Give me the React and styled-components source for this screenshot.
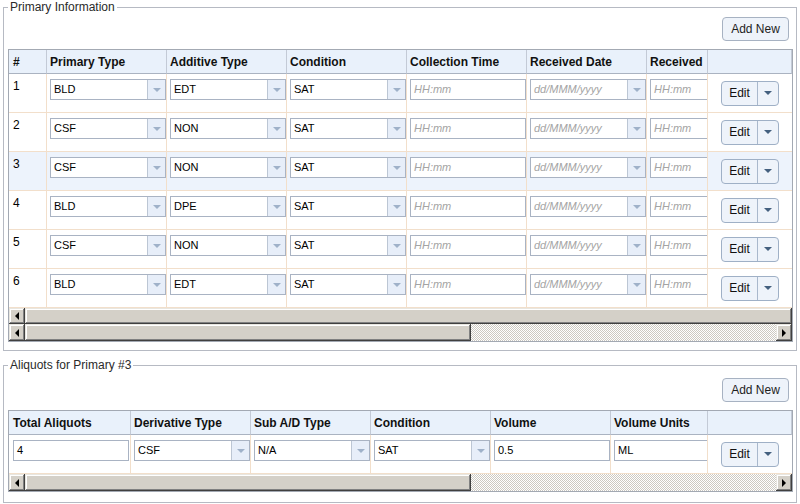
import React from 'react';
import styled, { createGlobalStyle } from 'styled-components';

const GlobalStyle = createGlobalStyle`
  html, body {
    margin: 0;
    padding: 0;
    background: #fff;
  }
  body {
    font-family: "Liberation Sans", Arial, sans-serif;
    font-size: 12px;
    color: #000;
  }
`;

const Page = styled.div`
  width: 800px;
  height: 504px;
  overflow: hidden;
  box-sizing: border-box;
  padding: 0 3px;
  display: flex;
  flex-direction: column;
  gap: 7px;
`;

const Fieldset = styled.fieldset`
  margin: 0;
  min-width: 0;
  border: 1px solid #b6bac3;
  padding: ${(p) => p.$pt}px 3px ${(p) => p.$pb}px 4px;
`;

const Legend = styled.legend`
  padding: 0 2px;
  font-size: 12px;
  line-height: 14px;
  color: #2a2a2a;
`;

const Toolbar = styled.div`
  display: flex;
  justify-content: flex-end;
  padding-right: 4px;
  margin-bottom: 8px;
`;

const AddButton = styled.button`
  width: 67px;
  height: 24px;
  padding: 0;
  border: 1px solid #a7b2c2;
  border-radius: 4px;
  background: #eef3fa;
  font-family: "Liberation Sans", Arial, sans-serif;
  font-size: 12px;
  color: #1e1e1e;
`;

const GridBox = styled.div`
  width: 785px;
  box-sizing: border-box;
  border: 1px solid #a3a9b3;
  overflow: hidden;
`;

const Table = styled.table`
  table-layout: fixed;
  width: 783px;
  border-collapse: separate;
  border-spacing: 0;
`;

const HeadRow = styled.tr`
  height: 24px;
`;

const BodyRow = styled.tr`
  height: 39px;
  background: ${(p) => (p.$selected ? '#edf3fc' : '#fff')};
`;

const Th = styled.th`
  padding: 0 0 0 3px;
  background: #e9f1fb;
  border-right: 1px solid #c3cad6;
  border-bottom: 1px solid #aab3c1;
  text-align: left;
  font-weight: bold;
  font-size: 12px;
  color: #111;
  white-space: nowrap;
  overflow: hidden;

  &:first-child {
    padding-left: 4px;
  }
`;

const Td = styled.td`
  padding: 5px 0 0 3px;
  border-right: 1px solid #f2dfcb;
  border-bottom: 1px solid #f2dfcb;
  vertical-align: top;
  overflow: hidden;
  white-space: nowrap;
  font-size: 12px;

  &:first-child {
    padding-left: 4px;
  }
`;

const ActionTd = styled.td`
  padding: 0;
  border-bottom: 1px solid #f2dfcb;
  vertical-align: middle;
  text-align: center;
`;

const Combo = styled.div`
  display: flex;
  width: 116px;
  height: 21px;
  box-sizing: border-box;
  border: 1px solid #a9b3c3;
  background: #fff;
`;

const FieldText = styled.span`
  flex: 1;
  padding-left: 3px;
  font-size: 11px;
  line-height: 19px;
  color: ${(p) => (p.$hint ? '#a4a4a4' : '#000')};
  font-style: ${(p) => (p.$hint ? 'italic' : 'normal')};
  overflow: hidden;
`;

const Trigger = styled.span`
  width: 17px;
  border-left: 1px solid #bcc6d4;
  background: #e7eef9;
  display: flex;
  align-items: center;
  justify-content: center;

  &::after {
    content: '';
    border-left: 4px solid transparent;
    border-right: 4px solid transparent;
    border-top: 4px solid #9fb1c9;
  }
`;

const TextField = styled.div`
  display: flex;
  width: 116px;
  height: 21px;
  box-sizing: border-box;
  border: 1px solid #a9b3c3;
  background: #fff;
`;

const SplitButton = styled.div`
  display: inline-flex;
  height: 25px;
  box-sizing: border-box;
  border: 1px solid #9fb0c6;
  border-radius: 4px;
  background: #eef3fa;
  overflow: hidden;
`;

const SplitMain = styled.span`
  width: 35px;
  border-right: 1px solid #a9b8cc;
  display: flex;
  align-items: center;
  justify-content: center;
  font-size: 12px;
  color: #111;
`;

const SplitArrow = styled.span`
  width: 20px;
  display: flex;
  align-items: center;
  justify-content: center;

  &::after {
    content: '';
    border-left: 4px solid transparent;
    border-right: 4px solid transparent;
    border-top: 4px solid #44607f;
  }
`;

const ScrollBar = styled.div`
  display: flex;
  height: ${(p) => p.$h}px;
  background-color: #fff;
  background-image: conic-gradient(#cdc9c1 25%, #fff 0 50%, #cdc9c1 0 75%, #fff 0);
  background-size: 2px 2px;
`;

const bevel = `
  background: #d4d0c8;
  box-shadow: inset -1px -1px #404040, inset 1px 1px #e8e6e0, inset -2px -2px #808080, inset 2px 2px #fff;
`;

const ArrowButton = styled.div`
  ${bevel}
  width: 16px;
  flex: none;
  display: flex;
  align-items: center;
  justify-content: center;

  &::after {
    content: '';
    border-top: 4px solid transparent;
    border-bottom: 4px solid transparent;
    ${(p) => (p.$dir === 'left' ? 'border-right: 4px solid #000;' : 'border-left: 4px solid #000;')}
  }
`;

const Thumb = styled.div`
  ${bevel}
  flex: ${(p) => (p.$w ? 'none' : '1')};
  width: ${(p) => (p.$w ? `${p.$w}px` : 'auto')};
`;

const Track = styled.div`
  flex: 1;
`;

function ComboBox({ value, hint }) {
  return (
    <Combo>
      <FieldText $hint={!!hint}>{value || hint}</FieldText>
      <Trigger />
    </Combo>
  );
}

function Input({ value, hint }) {
  return (
    <TextField>
      <FieldText $hint={!!hint}>{value || hint}</FieldText>
    </TextField>
  );
}

function EditButton() {
  return (
    <SplitButton>
      <SplitMain>Edit</SplitMain>
      <SplitArrow />
    </SplitButton>
  );
}

const primaryCols = [38, 120, 120, 120, 120, 120, 61, 84];
const primaryHeads = ['#', 'Primary Type', 'Additive Type', 'Condition', 'Collection Time', 'Received Date', 'Received', ''];
const primaries = [
  ['BLD', 'EDT', 'SAT'],
  ['CSF', 'NON', 'SAT'],
  ['CSF', 'NON', 'SAT'],
  ['BLD', 'DPE', 'SAT'],
  ['CSF', 'NON', 'SAT'],
  ['BLD', 'EDT', 'SAT'],
];

const aliquotCols = [122, 120, 120, 120, 120, 97, 84];
const aliquotHeads = ['Total Aliquots', 'Derivative Type', 'Sub A/D Type', 'Condition', 'Volume', 'Volume Units', ''];

export default function App() {
  const selected = 2;

  return (
    <Page>
      <GlobalStyle />

      <Fieldset $pt={3} $pb={8}>
        <Legend>Primary Information</Legend>
        <Toolbar>
          <AddButton>Add New</AddButton>
        </Toolbar>
        <GridBox>
          <Table>
            <colgroup>
              {primaryCols.map((w, i) => (
                <col key={i} style={{ width: w }} />
              ))}
            </colgroup>
            <thead>
              <HeadRow>
                {primaryHeads.map((h, i) => (
                  <Th key={i}>{h}</Th>
                ))}
              </HeadRow>
            </thead>
            <tbody>
              {primaries.map((r, i) => (
                <BodyRow key={i} $selected={i === selected}>
                  <Td>{i + 1}</Td>
                  <Td><ComboBox value={r[0]} /></Td>
                  <Td><ComboBox value={r[1]} /></Td>
                  <Td><ComboBox value={r[2]} /></Td>
                  <Td><Input hint="HH:mm" /></Td>
                  <Td><ComboBox hint="dd/MMM/yyyy" /></Td>
                  <Td><Input hint="HH:mm" /></Td>
                  <ActionTd><EditButton /></ActionTd>
                </BodyRow>
              ))}
            </tbody>
          </Table>
          <ScrollBar $h={16}>
            <ArrowButton $dir="left" />
            <Thumb />
          </ScrollBar>
          <ScrollBar $h={17}>
            <ArrowButton $dir="left" />
            <Thumb $w={446} />
            <Track />
            <ArrowButton $dir="right" />
          </ScrollBar>
        </GridBox>
      </Fieldset>

      <Fieldset $pt={6} $pb={10}>
        <Legend>Aliquots for Primary #3</Legend>
        <Toolbar>
          <AddButton>Add New</AddButton>
        </Toolbar>
        <GridBox>
          <Table>
            <colgroup>
              {aliquotCols.map((w, i) => (
                <col key={i} style={{ width: w }} />
              ))}
            </colgroup>
            <thead>
              <HeadRow>
                {aliquotHeads.map((h, i) => (
                  <Th key={i}>{h}</Th>
                ))}
              </HeadRow>
            </thead>
            <tbody>
              <BodyRow>
                <Td><Input value="4" /></Td>
                <Td><ComboBox value="CSF" /></Td>
                <Td><ComboBox value="N/A" /></Td>
                <Td><ComboBox value="SAT" /></Td>
                <Td><Input value="0.5" /></Td>
                <Td><Input value="ML" /></Td>
                <ActionTd><EditButton /></ActionTd>
              </BodyRow>
            </tbody>
          </Table>
          <ScrollBar $h={17}>
            <ArrowButton $dir="left" />
            <Thumb $w={446} />
            <Track />
            <ArrowButton $dir="right" />
          </ScrollBar>
        </GridBox>
      </Fieldset>
    </Page>
  );
}
